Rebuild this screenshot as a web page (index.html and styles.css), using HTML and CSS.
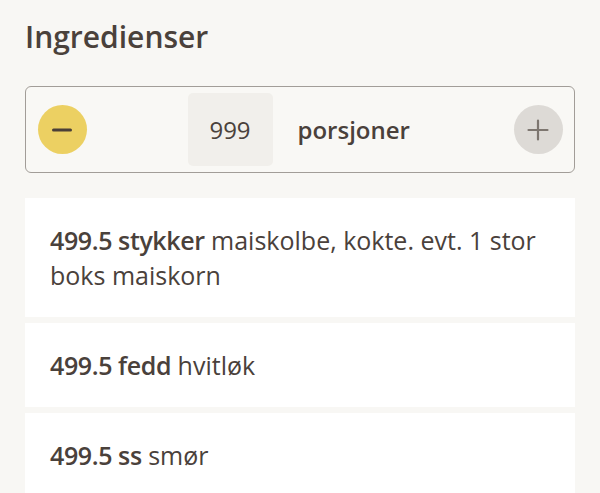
FILE: index.html
```html
<!DOCTYPE html>
<html lang="no">
<head>
<meta charset="utf-8">
<link rel="stylesheet" href="styles.css">
</head>
<body>
<main class="page">
  <h2 class="title">Ingredienser</h2>
  <div class="stepper">
    <button class="btn btn-minus" aria-label="Færre porsjoner">
      <svg width="20" height="20" viewBox="0 0 20 20"><path d="M1.5 10H18.5" stroke="#4a3f38" stroke-width="3" stroke-linecap="round"/></svg>
    </button>
    <div class="count">999</div>
    <div class="unit">porsjoner</div>
    <button class="btn btn-plus" aria-label="Flere porsjoner">
      <svg width="22" height="22" viewBox="0 0 22 22"><path d="M11 1.5V20.5M1.5 11H20.5" stroke="#7d7670" stroke-width="2.2" stroke-linecap="round"/></svg>
    </button>
  </div>
  <ul class="list">
    <li class="item"><b>499.5 stykker</b> maiskolbe, kokte. evt. 1 stor boks maiskorn</li>
    <li class="item"><b>499.5 fedd</b> hvitløk</li>
    <li class="item"><b>499.5 ss</b> smør</li>
  </ul>
</main>
</body>
</html>
```
FILE: styles.css
```css
* { box-sizing: border-box; }
html, body { margin: 0; padding: 0; }
body {
  background: #f8f7f4;
  font-family: "Open Sans", "Noto Sans", sans-serif;
  color: #4a413b;
}
.page { padding: 17px 25px 0 25px; }
.title {
  margin: 0 0 29px 0;
  font-size: 30px;
  line-height: 40px;
  font-weight: 600;
  color: #4a413b;
}
.stepper {
  display: flex;
  align-items: center;
  height: 87px;
  border: 1.5px solid #a29d98;
  border-radius: 6px;
  background: #f9f8f5;
  padding: 0 11.5px;
}
.btn {
  width: 49px;
  height: 49px;
  border-radius: 50%;
  border: 0;
  padding: 0;
  display: flex;
  align-items: center;
  justify-content: center;
  flex: none;
}
.btn-minus { background: #ecd062; }
.btn-plus { background: #dddad6; margin-left: auto; }
.count {
  margin-left: 101px;
  width: 85px;
  height: 73px;
  background: #f1efeb;
  border-radius: 5px;
  display: flex;
  align-items: center;
  justify-content: center;
  font-size: 24px;
}
.unit {
  margin-left: 25px;
  font-size: 24px;
  font-weight: 600;
}
.list {
  list-style: none;
  margin: 25px 0 0 0;
  padding: 0;
  display: flex;
  flex-direction: column;
  gap: 6px;
}
.item {
  background: #ffffff;
  padding: 24.5px 25px;
  font-size: 25px;
  line-height: 35px;
}
.item b { font-weight: 600; letter-spacing: -0.4px; }
```
